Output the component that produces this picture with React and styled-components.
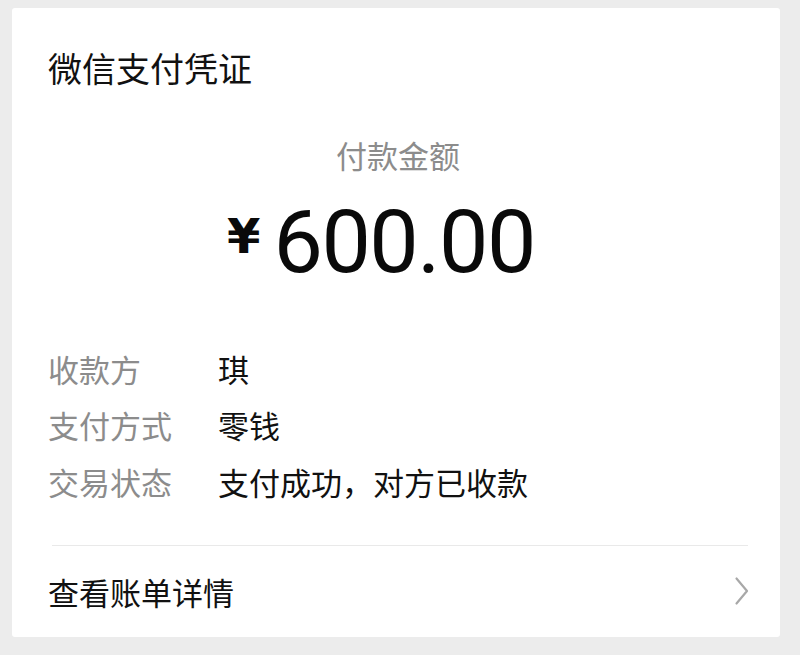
import React from "react";
import styled, { createGlobalStyle } from "styled-components";

const GlobalStyle = createGlobalStyle`
  html, body {
    margin: 0;
    padding: 0;
    background: #ececec;
  }
  body {
    font-family: "Noto Sans CJK SC", "Noto Sans", sans-serif;
  }
`;

const Page = styled.div`
  width: 800px;
  height: 655px;
  padding: 8px 20px 18px 12px;
  box-sizing: border-box;
`;

const Card = styled.div`
  background: #ffffff;
  height: 629px;
  box-sizing: border-box;
  padding-top: 40px;
  border-radius: 3px;
  display: flex;
  flex-direction: column;
`;

const Title = styled.h1`
  margin: 0 0 0 36px;
  font-size: 34px;
  line-height: 40px;
  font-weight: 400;
  color: #111;
`;

const AmountLabel = styled.div`
  margin-top: 47px;
  text-align: center;
  font-size: 31px;
  line-height: 40px;
  color: #8c8c8c;
  padding-left: 4px;
`;

const Amount = styled.div`
  margin-top: 22px;
  height: 90px;
  display: flex;
  justify-content: center;
  align-items: center;
  gap: 13px;
  padding-right: 30px;
  color: #0a0a0a;
`;

const Currency = styled.span`
  font-family: "DejaVu Sans", sans-serif;
  font-weight: 700;
  font-size: 48px;
  line-height: 90px;
  margin-top: -12px;
`;

const Digits = styled.span`
  font-family: Roboto, "Liberation Sans", sans-serif;
  font-weight: 400;
  font-size: 88px;
  line-height: 90px;
  letter-spacing: -1.5px;
`;

const Details = styled.div`
  margin: 53px 0 0 36px;
  display: flex;
  flex-direction: column;
`;

const Row = styled.div`
  display: flex;
  height: 56.5px;
  align-items: center;
  font-size: 31px;
`;

const Label = styled.span`
  width: 170px;
  color: #8c8c8c;
`;

const Value = styled.span`
  color: #111;
`;

const Divider = styled.hr`
  margin: 35px 32px 0 40px;
  border: none;
  border-top: 1px solid #e9e9e9;
`;

const Footer = styled.div`
  flex: 1;
  display: flex;
  align-items: center;
  justify-content: space-between;
  padding: 0 30px 0 36px;
`;

const FooterText = styled.span`
  font-size: 31px;
  color: #111;
`;

const Chevron = () => (
  <svg width="16" height="30" viewBox="0 0 16 30">
    <path
      d="M2.5 2.5 L13 15 L2.5 27.5"
      fill="none"
      stroke="#a8a8a8"
      strokeWidth="2.2"
      strokeLinecap="round"
      strokeLinejoin="round"
    />
  </svg>
);

const rows = [
  ["收款方", "琪"],
  ["支付方式", "零钱"],
  ["交易状态", "支付成功，对方已收款"],
];

export default function App() {
  return (
    <>
      <GlobalStyle />
      <Page>
        <Card>
          <Title>微信支付凭证</Title>
          <AmountLabel>付款金额</AmountLabel>
          <Amount>
            <Currency>¥</Currency>
            <Digits>600.00</Digits>
          </Amount>
          <Details>
            {rows.map(([k, v]) => (
              <Row key={k}>
                <Label>{k}</Label>
                <Value>{v}</Value>
              </Row>
            ))}
          </Details>
          <Divider />
          <Footer>
            <FooterText>查看账单详情</FooterText>
            <Chevron />
          </Footer>
        </Card>
      </Page>
    </>
  );
}
